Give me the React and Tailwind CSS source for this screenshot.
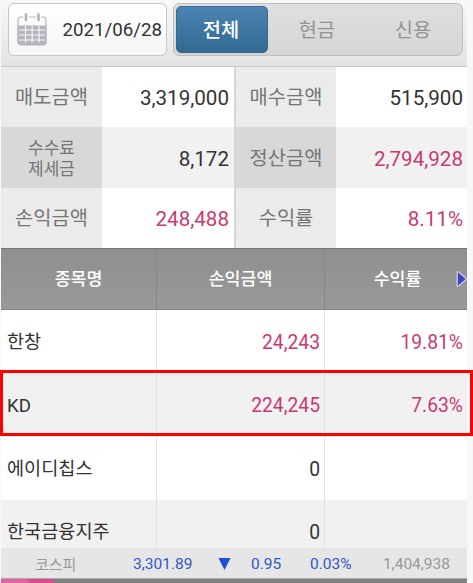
import clsx from 'clsx';

const summary = [
  [
    { label: ['매도금액'], value: '3,319,000' },
    { label: ['매수금액'], value: '515,900' },
  ],
  [
    { label: ['수수료', '제세금'], value: '8,172' },
    { label: ['정산금액'], value: '2,794,928', gain: true },
  ],
  [
    { label: ['손익금액'], value: '248,488', gain: true },
    { label: ['수익률'], value: '8.11%', gain: true },
  ],
];

const stocks = [
  { name: '한창', profit: '24,243', rate: '19.81%' },
  { name: 'KD', profit: '224,245', rate: '7.63%', selected: true },
  { name: '에이디칩스', profit: '0', rate: '' },
  { name: '한국금융지주', profit: '0', rate: '' },
];

function CalendarIcon() {
  return (
    <svg width="30" height="33" viewBox="0 0 30 33" className="shrink-0">
      <rect x="1" y="4" width="28" height="27.8" rx="3" fill="#fafafa" stroke="#b6b6c0" strokeWidth="1.2" />
      <path d="M.5 12.5h29V29a3 3 0 0 1-3 3h-23a3 3 0 0 1-3-3z" fill="#b4b4be" />
      <path d="M9 3v4M21.5 3v4" stroke="#fff" strokeWidth="5.5" strokeLinecap="round" />
      <path d="M9 1.5v5.5M21.5 1.5v5.5" stroke="#b0b0ba" strokeWidth="2.6" strokeLinecap="round" />
      <path
        d="M2 17h26M2 22h26M2 27h26M8.5 13v16.5M15.2 13v16.5M22 13v16.5"
        stroke="#f6f6f8"
        strokeWidth="1.2"
      />
    </svg>
  );
}

function Toolbar() {
  return (
    <div className="flex h-[67px] items-start border-b border-[#c9c9c9] bg-linear-to-b from-[#f8f8f8] to-[#e4e4e4] pt-[3px] pl-[7px]">
      <div className="flex h-[53px] w-[159px] items-center justify-between rounded-md border border-[#c6c6c6] bg-linear-to-b from-white to-[#f5f5f5] pr-[4px] pl-2">
        <CalendarIcon />
        <span className="pt-[2px] text-[18.7px] text-[#333]">2021/06/28</span>
      </div>
      <div className="ml-[6px] flex h-[53px] w-[290px] rounded-md border border-[#c0c0c0] bg-linear-to-b from-[#dfdfdf] to-[#d6d6d6] p-[2px] text-[19.8px] text-[#929292]">
        <button className="w-[92px] rounded-[5px] border border-[#35698f] bg-linear-to-b from-[#4b82b3] to-[#306b91] pt-[2px] pr-[2px] font-medium text-white">
          전체
        </button>
        <button className="w-[98px] pt-[2px]">현금</button>
        <button className="flex-1 pt-[2px]">신용</button>
      </div>
    </div>
  );
}

function SummaryCell({ item, shaded }) {
  return (
    <>
      <div
        className={clsx(
          'flex flex-col items-center justify-center pt-[2px] text-[#757575]',
          shaded ? 'bg-[#d8d8d8]' : 'bg-[#ebebeb]',
          item.label.length > 1 ? 'text-[17px] leading-[21px]' : 'text-[19.8px]'
        )}
      >
        {item.label.map((line) => (
          <span key={line}>{line}</span>
        ))}
      </div>
      <div
        className={clsx(
          'flex items-center justify-end pt-[3px] text-[20.6px]',
          shaded ? 'bg-[#f1f1f1]' : 'bg-white',
          item.gain ? 'text-[#c93a72]' : 'text-[#333]'
        )}
      >
        {item.value}
      </div>
    </>
  );
}

function Summary() {
  return (
    <div className="h-[181px]">
      {summary.map(([left, right], i) => (
        <div key={left.value} className="flex h-[60px] nth-[2]:h-[61px]">
          <div className="grid w-[233px] grid-cols-[101px_132px] *:last:pr-[5px]">
            <SummaryCell item={left} shaded={i === 1} />
          </div>
          <div className="grid w-[233px] grid-cols-[100px_131px] border-l-2 border-[#d6d6d6] *:last:pr-[4px]">
            <SummaryCell item={right} shaded={i === 1} />
          </div>
        </div>
      ))}
    </div>
  );
}

function StockTable() {
  return (
    <div className="h-[300px]">
      <div className="relative grid h-[62px] grid-cols-[156px_168px_142px] border-t border-b border-t-[#777] border-b-[#858585] bg-linear-to-b from-[#8f8f8f] to-[#999] pt-px text-[17.3px] font-medium text-white">
        <div className="flex items-center justify-center border-r border-[#868686]">종목명</div>
        <div className="flex items-center justify-center border-r border-[#868686] pt-px">손익금액</div>
        <div className="flex items-center justify-center pt-px pl-[3px]">수익률</div>
        <svg width="11" height="18" viewBox="0 0 11 18" className="absolute top-[21px] right-0">
          <path d="M1.2 2.5v13q0 1.5 1.4.5L10.6 9 2.6 2q-1.4-1-1.4.5z" fill="#3f44c0" stroke="#c8c8e6" strokeWidth="1.3" />
        </svg>
      </div>
      {stocks.map((stock, i) => (
        <div
          key={stock.name}
          className={clsx(
            'relative grid grid-cols-[156px_168px_142px] text-[19.3px] *:pt-[2px]',
            i === 1 && 'h-[64px]',
            (i === 0 || i === 2) && 'h-[63px]',
            i === 3 && 'h-[48px] grid-rows-[63px] overflow-hidden',
            i % 2 ? 'bg-[#f1f1f1]' : 'bg-white',
            stock.rate ? 'text-[#c93a72]' : 'text-[#333]'
          )}
        >
          <div className="flex items-center border-r border-[#e2e2e2] pl-[6px] text-[18.6px] text-[#333]">
            {stock.name}
          </div>
          <div className="flex items-center justify-end border-r border-[#e2e2e2] pr-[4px]">{stock.profit}</div>
          <div className="flex items-center justify-end pr-[4px]">{stock.rate}</div>
          {stock.selected && (
            <div className="absolute -top-[3px] -left-px z-10 h-[66px] w-[473px] border-3 border-[#ff0000]" />
          )}
        </div>
      ))}
    </div>
  );
}

function IndexBar() {
  return (
    <div className="flex h-[30px] items-center bg-[#e6e6e6] pt-[4px] text-[15.5px] text-[#3258c4]">
      <span className="w-[132px] pl-[34px] text-[15px] text-[#999]">코스피</span>
      <span className="w-[85px]">3,301.89</span>
      <svg width="13" height="12" viewBox="0 0 13 12" className="-mt-[2px]">
        <path d="M.5 0h12l-6 12z" fill="#1d4fd8" />
      </svg>
      <span className="w-[60px] pl-[20px]">0.95</span>
      <span className="flex-1 pl-[19px]">0.03%</span>
      <span className="pr-[17px] text-[#999]">1,404,938</span>
    </div>
  );
}

export default function App() {
  return (
    <div className="h-[583px] w-[473px] overflow-hidden bg-[#f8f8f8] pl-px font-[Roboto,'Noto_Sans_CJK_KR',sans-serif] leading-none">
      <div className="w-[466px]">
        <Toolbar />
        <Summary />
        <StockTable />
        <IndexBar />
        <div className="flex h-[5px] border-t border-[#aaa] bg-[#808080]">
          <div className="w-[29px] bg-[#e065a5] [clip-path:polygon(0_0,90%_0,100%_100%,0_100%)]" />
          <div className="-ml-[3px] w-[28px] bg-[#dc4c94] [clip-path:polygon(0_0,90%_0,100%_100%,10%_100%)]" />
        </div>
      </div>
    </div>
  );
}
